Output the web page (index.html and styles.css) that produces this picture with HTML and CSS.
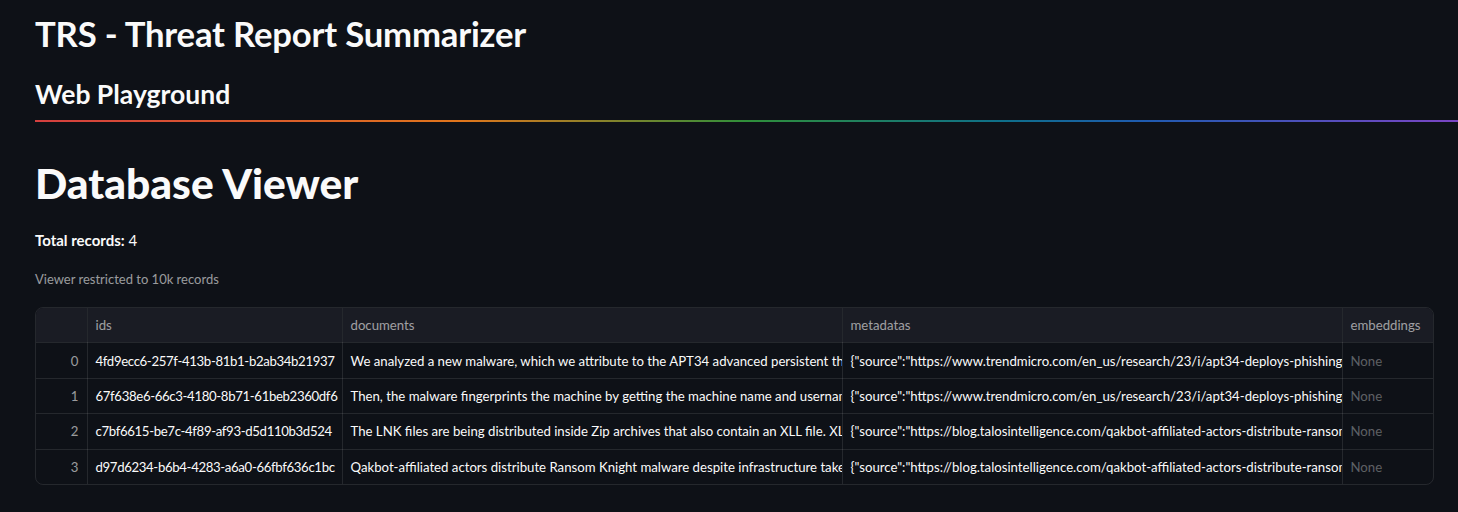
FILE: index.html
```html
<!DOCTYPE html>
<html lang="en">
<head>
<meta charset="utf-8">
<title>TRS - Threat Report Summarizer</title>
<link rel="stylesheet" href="styles.css">
</head>
<body>
<main class="main">
  <h2 class="app-title">TRS - Threat Report Summarizer</h2>
  <h3 class="app-sub">Web Playground</h3>
  <hr class="rainbow">
  <h1 class="page-title">Database Viewer</h1>
  <p class="total"><strong>Total records:</strong> 4</p>
  <p class="caption">Viewer restricted to 10k records</p>
  <div class="grid-wrap">
    <table class="grid">
      <colgroup>
        <col class="c-idx"><col class="c-ids"><col class="c-doc"><col class="c-meta"><col class="c-emb">
      </colgroup>
      <thead>
        <tr><th></th><th>ids</th><th>documents</th><th>metadatas</th><th>embeddings</th></tr>
      </thead>
      <tbody>
        <tr>
          <td class="idx">0</td>
          <td class="uid">4fd9ecc6-257f-413b-81b1-b2ab34b21937</td>
          <td>We analyzed a new malware, which we attribute to the APT34 advanced persistent threat group, that was used in a phishing attack.</td>
          <td>{"source":"https://www.trendmicro.com/en_us/research/23/i/apt34-deploys-phishing-attack-with-new-malware.html"}</td>
          <td class="none">None</td>
        </tr>
        <tr>
          <td class="idx">1</td>
          <td class="uid">67f638e6-66c3-4180-8b71-61beb2360df6</td>
          <td>Then, the malware fingerprints the machine by getting the machine name and username of the infected host.</td>
          <td>{"source":"https://www.trendmicro.com/en_us/research/23/i/apt34-deploys-phishing-attack-with-new-malware.html"}</td>
          <td class="none">None</td>
        </tr>
        <tr>
          <td class="idx">2</td>
          <td class="uid">c7bf6615-be7c-4f89-af93-d5d110b3d524</td>
          <td>The LNK files are being distributed inside Zip archives that also contain an XLL file. XLL files are Excel add-ins.</td>
          <td>{"source":"https://blog.talosintelligence.com/qakbot-affiliated-actors-distribute-ransom/"}</td>
          <td class="none">None</td>
        </tr>
        <tr>
          <td class="idx">3</td>
          <td class="uid">d97d6234-b6b4-4283-a6a0-66fbf636c1bc</td>
          <td>Qakbot-affiliated actors distribute Ransom Knight malware despite infrastructure takedown.</td>
          <td>{"source":"https://blog.talosintelligence.com/qakbot-affiliated-actors-distribute-ransom/"}</td>
          <td class="none">None</td>
        </tr>
      </tbody>
    </table>
  </div>
</main>
</body>
</html>
```
FILE: styles.css
```css
html, body {
  margin: 0;
  padding: 0;
  background: #0e1117;
  color: #fafafa;
  font-family: Lato, "Noto Sans", sans-serif;
}

.main {
  padding: 0 26px 0 35px;
  overflow: hidden;
}

.app-title {
  margin: 0;
  padding-top: 12px;
  font-size: 34.7px;
  line-height: 44px;
  font-weight: 700;
  letter-spacing: -0.2px;
}

.app-sub {
  margin: 0;
  padding-top: 20px;
  font-size: 26.5px;
  line-height: 36px;
  font-weight: 700;
}

.rainbow {
  margin: 8px -26px 0 0;
  border: 0;
  height: 2px;
  background: linear-gradient(to right, #d43f3f, #e0761c 30%, #2f8f3a 50%, #0e6f8a 68%, #1f5bb0 78%, #7a45c4);
}

.page-title {
  margin: 0;
  padding-top: 35px;
  font-size: 42.5px;
  line-height: 52px;
  font-weight: 900;
}

.total {
  margin: 21px 0 0;
  font-size: 15px;
  line-height: 20px;
}

.total strong {
  font-weight: 700;
}

.caption {
  margin: 19px 0 0;
  font-size: 13px;
  line-height: 20px;
  color: rgba(250, 250, 250, 0.6);
}

.grid-wrap {
  margin-top: 18px;
  width: 1397px;
  border: 1px solid rgba(250, 250, 250, 0.1);
  border-radius: 8px;
  overflow: hidden;
}

.grid {
  width: 100%;
  border-collapse: collapse;
  table-layout: fixed;
  font-size: 13.2px;
}

.c-idx { width: 51px; }
.c-ids { width: 255px; }
.c-doc { width: 500px; }
.c-meta { width: 500px; }
.c-emb { width: 91px; }

.grid th,
.grid td {
  height: 34.4px;
  padding: 0 8px;
  white-space: nowrap;
  overflow: hidden;
  text-overflow: clip;
  text-align: left;
  border-right: 1px solid rgba(250, 250, 250, 0.1);
  border-bottom: 1px solid rgba(250, 250, 250, 0.1);
}

.grid th:last-child,
.grid td:last-child {
  border-right: 0;
}

.grid tbody tr:last-child td {
  border-bottom: 0;
}

.grid th {
  background: #1a1c24;
  color: rgba(250, 250, 250, 0.6);
  font-weight: 400;
}

.grid td {
  color: #fafafa;
}

.grid td.uid {
  letter-spacing: -0.35px;
}

.grid td.idx {
  text-align: right;
  color: rgba(250, 250, 250, 0.6);
}

.grid td.none {
  color: rgba(250, 250, 250, 0.35);
}
```
